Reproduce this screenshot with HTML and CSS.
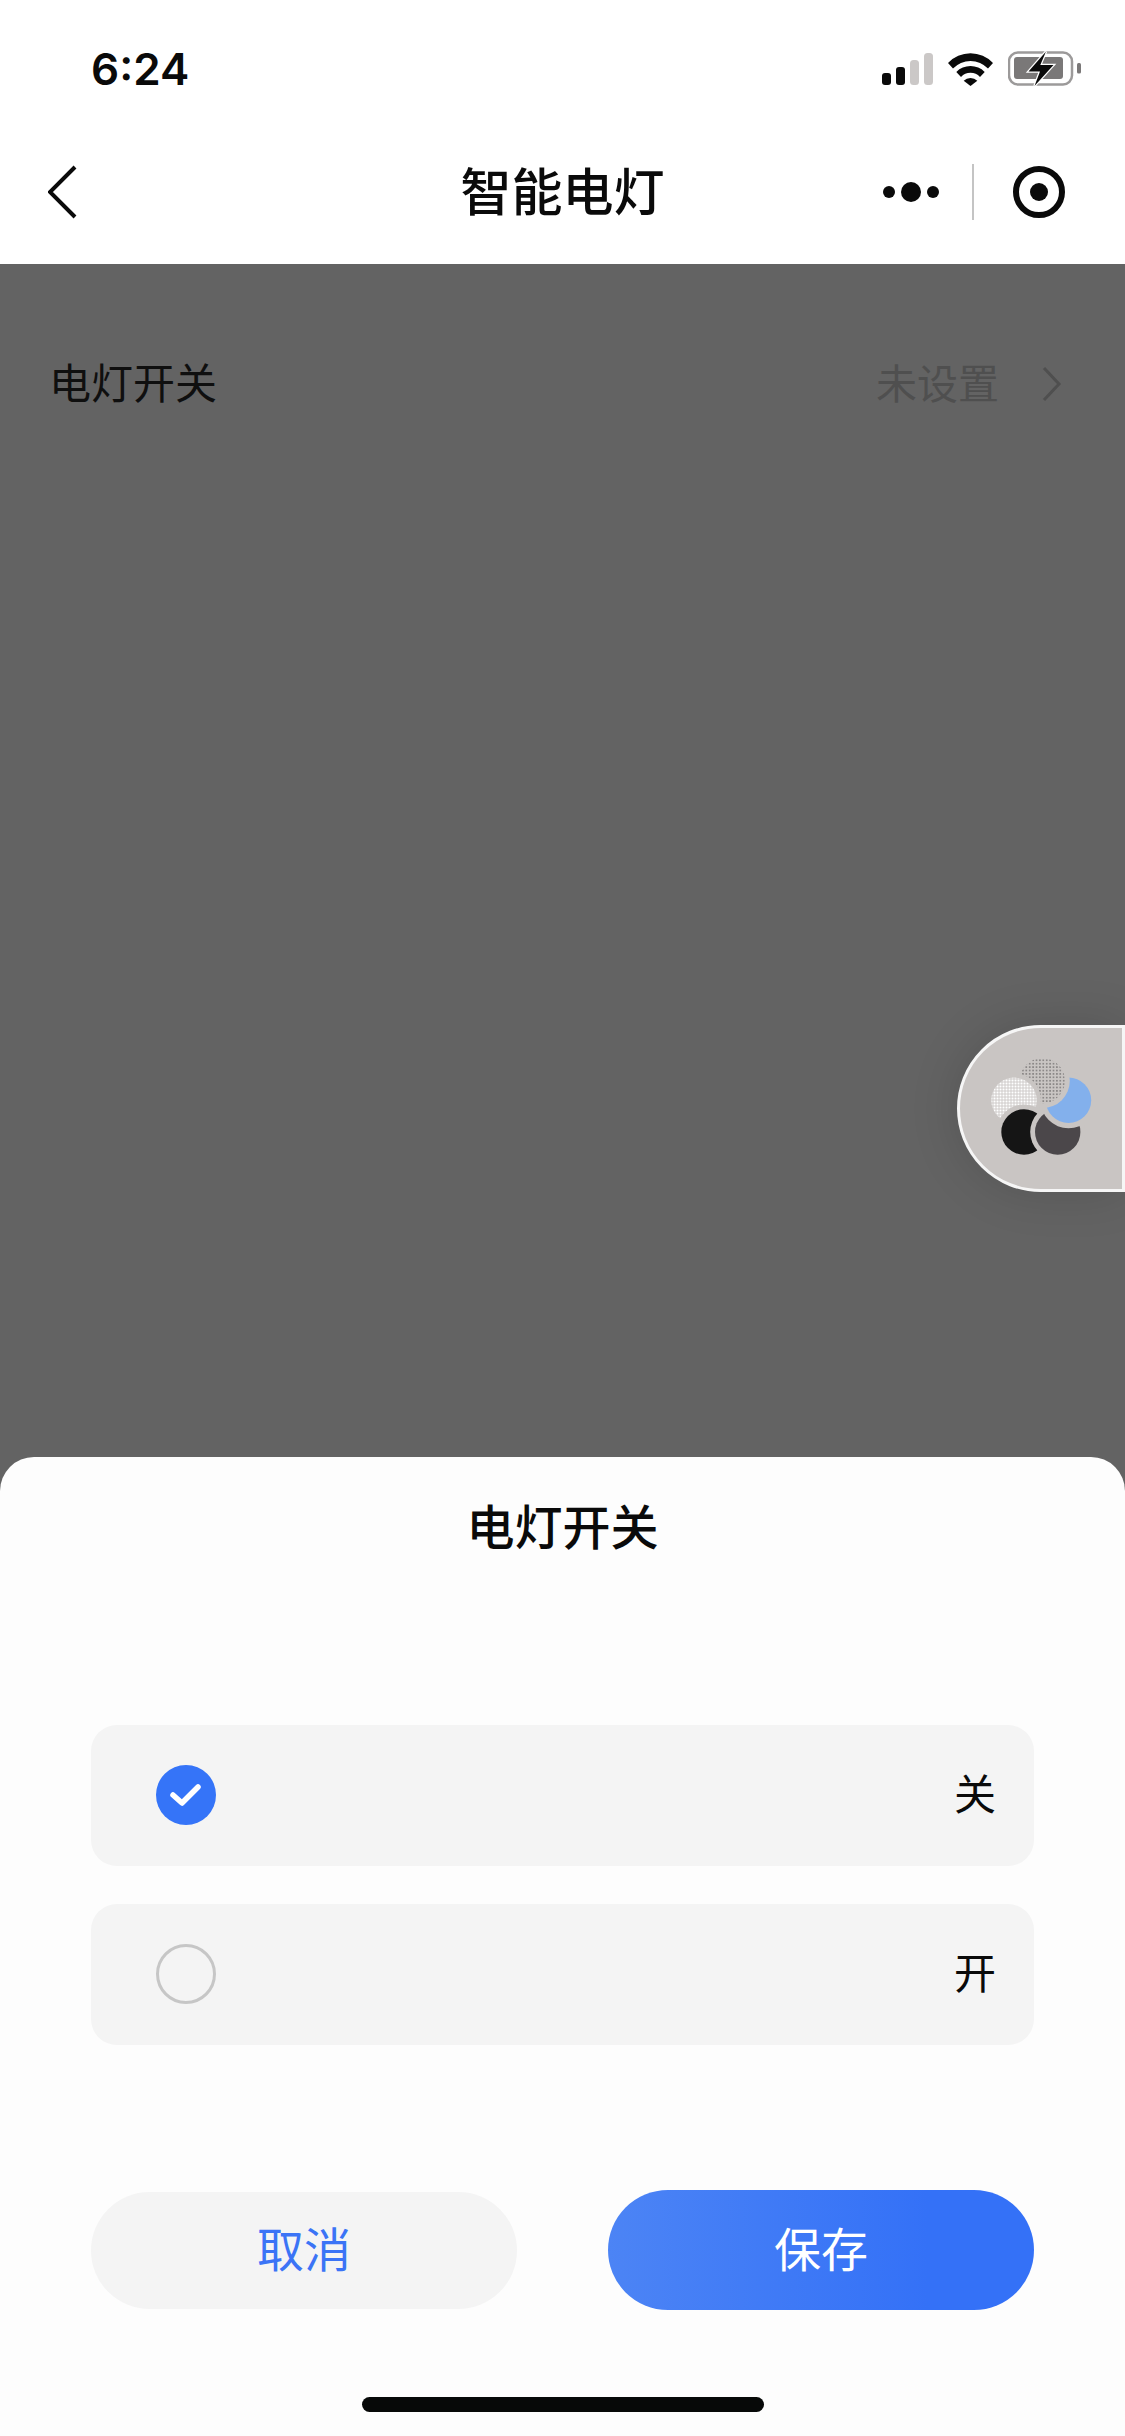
FILE: index.html
```html
<!DOCTYPE html>
<html lang="zh-CN">
<head>
<meta charset="utf-8">
<title>智能电灯</title>
<link rel="stylesheet" href="styles.css">
</head>
<body>
<div class="app">
  <header class="status">
    <span class="time">6:24</span>
    <div class="status-icons">
      <svg class="signal" viewBox="0 0 51 32" width="51" height="32">
        <rect class="on" x="0" y="20" width="9" height="12" rx="3"/>
        <rect class="on" x="14" y="14" width="9" height="18" rx="3"/>
        <rect class="off" x="28" y="7" width="9" height="25" rx="3.5"/>
        <rect class="off" x="42" y="0" width="9" height="32" rx="3.5"/>
      </svg>
      <svg class="wifi" viewBox="0 0 45 33" width="45" height="33">
        <path d="M0 10A31 31 0 0 1 45 10L40 15.5A24 24 0 0 0 5 15.5Z"/>
        <path d="M8.3 19A20 20 0 0 1 36.7 19L32 24A13 13 0 0 0 13 24Z"/>
        <path d="M15.7 27.7A10 10 0 0 1 29.3 27.7L22.5 33Z"/>
      </svg>
      <svg class="battery" viewBox="0 0 74 36" width="74" height="36">
        <rect class="shell" x="1" y="1.5" width="63" height="32" rx="9"/>
        <rect class="cell" x="6" y="6" width="49" height="22" rx="3"/>
        <rect class="cell" x="69" y="12" width="4" height="10.500" rx="1.500"/>
        <path class="bolt" d="M38 0.500L20.500 20.500H32L26.500 35L45.500 14H32.300Z"/>
      </svg>
    </div>
  </header>

  <nav class="nav">
    <svg class="back" viewBox="0 0 30 54" width="30" height="54"><path d="M27 2L2 27L27 52"/></svg>
    <h1 class="nav-title">智能电灯</h1>
    <div class="capsule">
      <svg class="more" viewBox="0 0 56 20" width="56" height="20">
        <circle cx="6" cy="10" r="6"/><circle cx="28" cy="10" r="10"/><circle cx="50" cy="10" r="6"/>
      </svg>
      <span class="capsule-line"></span>
      <svg class="record" viewBox="0 0 52 52" width="52" height="52">
        <circle class="ring" cx="26" cy="26" r="23"/><circle cx="26" cy="26" r="9"/>
      </svg>
    </div>
  </nav>

  <main class="page">
    <div class="setting">
      <span class="setting-name">电灯开关</span>
      <div class="setting-value">
        <span class="setting-text">未设置</span>
        <svg class="chevron" viewBox="0 0 20 36" width="20" height="36"><path d="M2 2L17 18L2 34"/></svg>
      </div>
    </div>
    <aside class="assistant">
      <svg viewBox="0 0 162 161" width="162" height="161">
        <defs>
          <mask id="cut-light" maskUnits="userSpaceOnUse" x="0" y="0" width="162" height="161">
            <rect width="162" height="161" fill="#fff"/>
            <circle cx="64" cy="104" r="27.500" fill="#000"/>
          </mask>
          <pattern id="dots-grey" width="3.400" height="3.400" patternUnits="userSpaceOnUse">
            <rect width="3.400" height="3.400" fill="#c9c5c3"/>
            <circle cx="1.700" cy="1.700" r="0.900" fill="#7c7979"/>
          </pattern>
          <pattern id="dots-light" width="3" height="3" patternUnits="userSpaceOnUse">
            <rect width="3" height="3" fill="#d8d5d4"/>
            <circle cx="1.500" cy="1.500" r="1" fill="#ffffff"/>
          </pattern>
        </defs>
        <circle class="black" cx="64" cy="104" r="22.700"/>
        <circle class="halo" cx="97.700" cy="104" r="27.500"/>
        <circle class="dark" cx="97.700" cy="104" r="22.700"/>
        <circle class="halo" cx="108.500" cy="72.300" r="28"/>
        <circle class="blue" cx="108.500" cy="72.300" r="22.700"/>
        <circle class="halo" cx="82.300" cy="52.700" r="27.500"/>
        <circle class="grey" cx="82.300" cy="52.700" r="22.700"/>
        <g mask="url(#cut-light)">
          <circle class="halo" cx="54" cy="72.300" r="27"/>
          <circle class="light" cx="54" cy="72.300" r="22.700"/>
        </g>
      </svg>
    </aside>
  </main>

  <section class="sheet">
    <h2 class="sheet-title">电灯开关</h2>
    <div class="options">
      <div class="option">
        <span class="radio radio-on">
          <svg viewBox="0 0 60 60" width="60" height="60"><path d="M17 30L26 38L42 22"/></svg>
        </span>
        <span class="option-label">关</span>
      </div>
      <div class="option">
        <span class="radio"></span>
        <span class="option-label">开</span>
      </div>
    </div>
    <div class="actions">
      <button class="btn btn-cancel" type="button">取消</button>
      <button class="btn btn-save" type="button">保存</button>
    </div>
    <div class="home-bar"></div>
  </section>
</div>
</body>
</html>
```
FILE: styles.css
```css
* { box-sizing: border-box; }
html, body { margin: 0; padding: 0; }
body {
  width: 1125px;
  height: 2436px;
  overflow: hidden;
  background: #636363;
  font-family: "Noto Sans CJK SC", "Liberation Sans", sans-serif;
  color: #0a0a0a;
}
.app {
  width: 1125px;
  height: 2436px;
  display: flex;
  flex-direction: column;
}

/* status bar */
.status {
  height: 136px;
  flex: none;
  background: #fff;
  display: flex;
  align-items: center;
  justify-content: space-between;
  padding: 2px 43px 0 91px;
}
.time {
  font-family: Inter, "Liberation Sans", sans-serif;
  font-size: 44px;
  font-weight: 600;
  line-height: 1;
}
.status-icons { display: flex; align-items: center; gap: 15px; }
.signal .on { fill: #0a0a0a; }
.signal .off { fill: #cbc8c7; }
.wifi path { fill: #0a0a0a; }
.shell { fill: none; stroke: #9c9a9a; stroke-width: 2.500; }
.cell { fill: #7a7878; }
.bolt { fill: #0a0a0a; stroke: #fff; stroke-width: 2.500; paint-order: stroke; }

/* navigation */
.nav {
  height: 128px;
  flex: none;
  background: #fff;
  display: grid;
  grid-template-columns: 1fr auto 1fr;
  align-items: center;
  padding: 0 60px 16px;
}
.back { margin-left: -12px; }
.back path { fill: none; stroke: #0a0a0a; stroke-width: 4; }
.nav-title {
  margin: 0 0 6px;
  font-size: 51px;
  font-weight: 500;
  line-height: 72px;
}
.capsule { display: flex; align-items: center; justify-content: flex-end; }
.more circle { fill: #0a0a0a; }
.capsule-line { width: 2px; height: 56px; background: #c4c4c4; margin: 0 39px 0 33px; }
.ring { fill: none; stroke: #0a0a0a; stroke-width: 6; }
.record circle:not(.ring) { fill: #0a0a0a; }

/* page behind the sheet */
.page {
  flex: 1;
  position: relative;
  background: #636363;
}
.setting {
  height: 120px;
  margin-top: 60px;
  display: flex;
  align-items: center;
  justify-content: space-between;
  padding: 0 63px 0 49px;
  font-size: 42px;
  line-height: 60px;
}
.setting-name { color: #0f0f0f; padding-bottom: 6px; }
.setting-value { display: flex; align-items: center; gap: 43px; color: #4f4f4f; }
.setting-text { padding-bottom: 6px; font-size: 41px; }
.chevron path { fill: none; stroke: #4f4f4f; stroke-width: 3; }
.assistant {
  position: absolute;
  top: 761px;
  right: 0;
  width: 168px;
  height: 167px;
  background: #c9c5c3;
  border: 3px solid #f6f6f6;
  border-radius: 84px 0 0 84px;
  box-shadow: 0 0 50px rgba(0, 0, 0, 0.14);
}
.assistant svg { display: block; }
.black { fill: #151515; }
.dark { fill: #4b474a; }
.blue { fill: #83b0ec; }
.grey { fill: url(#dots-grey); }
.light { fill: url(#dots-light); }
.halo { fill: #c9c5c3; }

/* bottom sheet */
.sheet {
  height: 979px;
  flex: none;
  background: #fdfdfd;
  border-radius: 34px 34px 0 0;
  padding: 35px 91px 24px;
  display: flex;
  flex-direction: column;
}
.sheet-title {
  margin: 0 0 6px;
  height: 64px;
  font-size: 48px;
  font-weight: 500;
  line-height: 64px;
  text-align: center;
}
.options {
  margin-top: 163px;
  display: flex;
  flex-direction: column;
  gap: 38px;
}
.option {
  height: 141px;
  background: #f4f4f4;
  border-radius: 26px;
  display: flex;
  align-items: center;
  justify-content: space-between;
  padding: 0 38px 2px 65px;
}
.radio {
  width: 60px;
  height: 60px;
  border-radius: 50%;
  border: 3px solid #c6c6c6;
  display: block;
}
.radio-on { border: 0; background: #3574f8; }
.radio-on svg { display: block; }
.radio-on path { fill: none; stroke: #fff; stroke-width: 5.500; stroke-linecap: round; stroke-linejoin: round; }
.option-label { font-size: 42px; line-height: 56px; padding-bottom: 6px; color: #0a0a0a; }
.actions {
  margin-top: 145px;
  display: flex;
  align-items: center;
  justify-content: space-between;
}
.btn {
  border: 0;
  padding: 0 0 7px;
  font-family: inherit;
  font-size: 47px;
  line-height: 1;
  border-radius: 60px;
}
.btn-cancel { width: 426px; height: 117px; background: #f4f4f4; color: #3b74f6; }
.btn-save {
  width: 426px;
  height: 120px;
  background: linear-gradient(90deg, #4c84f5 0%, #3471f7 75%);
  color: #fff;
}
.home-bar {
  width: 402px;
  height: 15px;
  margin: 87px auto 0;
  background: #070908;
  border-radius: 8px;
}
```
